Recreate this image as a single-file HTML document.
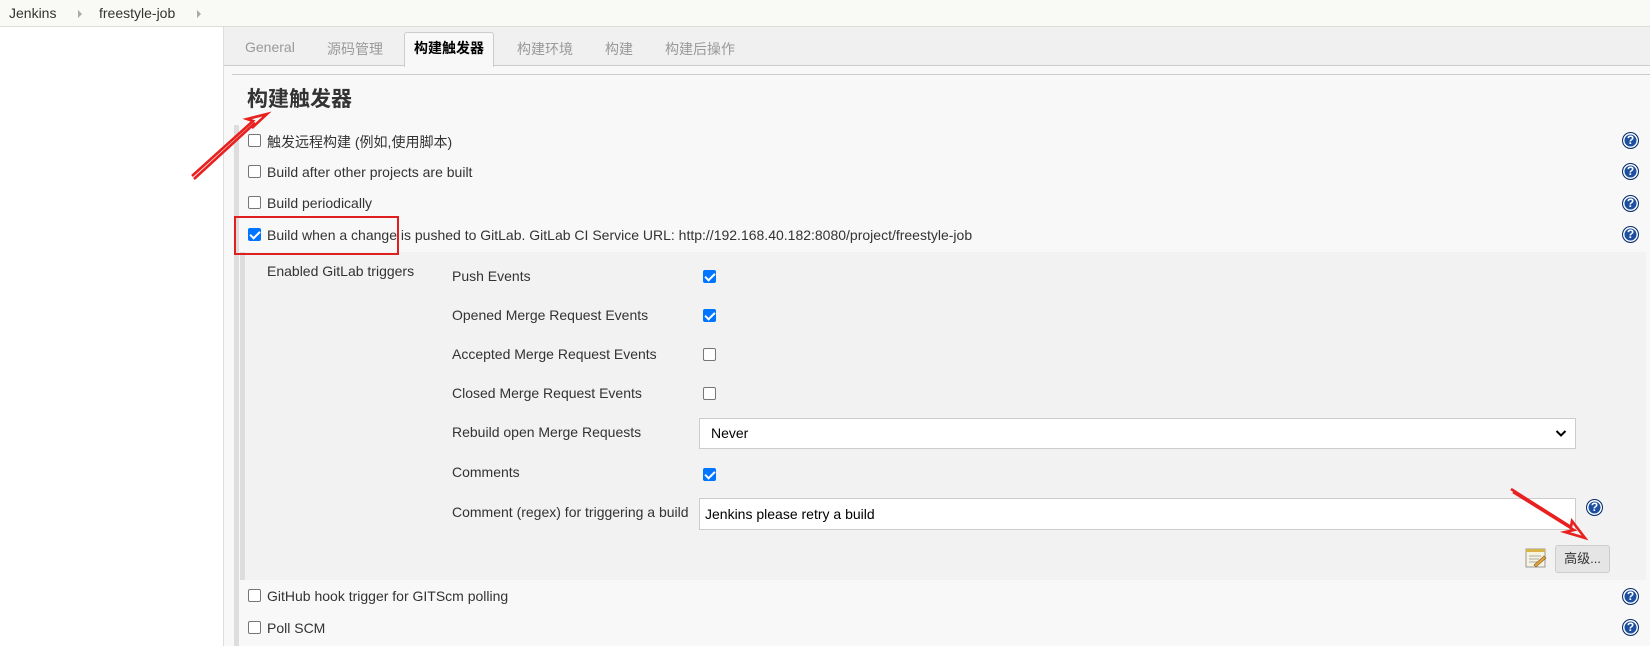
<!DOCTYPE html>
<html><head><meta charset="utf-8"><style>
*{box-sizing:border-box;margin:0;padding:0}
body{width:1650px;height:646px;overflow:hidden;background:#fff;font-family:"Liberation Sans","Noto Sans CJK SC",sans-serif;font-size:14px;color:#333;position:relative}
.abs{position:absolute}
.bc{left:0;top:0;width:1650px;height:27px;background:#f9faf6;border-bottom:1px solid #ddd}
.bc span{position:absolute;top:5px;color:#333;font-size:14px}
.tri{position:absolute;top:10px;width:0;height:0;border-left:4px solid #aaa;border-top:4px solid transparent;border-bottom:4px solid transparent}
.main{left:223px;top:27px;width:1427px;height:619px;background:#f8f8f8;border-left:1px solid #ddd}
.tabs{left:224px;top:27px;width:1426px;height:39px;background:#f0f0f0;border-bottom:1px solid #ccc}
.tab{position:absolute;top:12px;color:#999;font-size:14px}
.atab{left:404px;top:32px;width:90px;height:35px;background:#f8f8f8;border:1px solid #ccc;border-bottom:none;border-radius:3px 3px 0 0;font-weight:bold;color:#000;text-align:center;line-height:30px;font-size:14px}
.cb{position:absolute;width:13px;height:13px;border:1px solid #767676;border-radius:2px;background:#fff}
.cb.on{background:#0075ff;border-color:#0075ff}
.cb.on::after{content:"";position:absolute;left:3px;top:0px;width:4px;height:8px;border:solid #fff;border-width:0 2px 2px 0;transform:rotate(45deg)}
.t{position:absolute;white-space:nowrap}
.help{position:absolute;width:17px;height:17px;border-radius:50%;background:#1c4fa0;border:1px solid #0a2f6a;color:#fff;font-weight:bold;font-size:12px;text-align:center;line-height:15px;box-shadow:inset 0 0 0 1.5px #fff}
</style></head><body>
<div class="abs bc"><span style="left:9px">Jenkins</span><div class="tri" style="left:78px"></div><span style="left:99px">freestyle-job</span><div class="tri" style="left:197px"></div></div>
<div class="abs main"></div>
<div class="abs tabs"></div>
<div class="tab" style="left:245px;top:39px">General</div>
<div class="tab" style="left:327px;top:39px">源码管理</div>
<div class="abs atab">构建触发器</div>
<div class="tab" style="left:517px;top:39px">构建环境</div>
<div class="tab" style="left:605px;top:39px">构建</div>
<div class="tab" style="left:665px;top:39px">构建后操作</div>
<div class="abs" style="left:232px;top:74px;width:1418px;height:1px;background:#ccc"></div>
<div class="t" style="left:247px;top:83px;font-size:21px;font-weight:bold;color:#333">构建触发器</div>
<div class="abs" style="left:234px;top:125px;width:5px;height:521px;background:#ddd"></div>
<div class="abs" style="left:240px;top:252px;width:1406px;height:328px;background:#f2f2f2"></div>
<div class="abs" style="left:240px;top:252px;width:5px;height:328px;background:#ddd"></div>

<div class="cb" style="left:248px;top:134px"></div><div class="t" style="left:267px;top:132px">触发远程构建 (例如,使用脚本)</div>
<div class="cb" style="left:248px;top:165px"></div><div class="t" style="left:267px;top:164px">Build after other projects are built</div>
<div class="cb" style="left:248px;top:196px"></div><div class="t" style="left:267px;top:195px">Build periodically</div>
<div class="cb on" style="left:248px;top:228px"></div><div class="t" style="left:267px;top:227px">Build when a change is pushed to GitLab. GitLab CI Service URL: http://192.168.40.182:8080/project/freestyle-job</div>
<div class="help" style="left:1622px;top:132px">?</div>
<div class="help" style="left:1622px;top:163px">?</div>
<div class="help" style="left:1622px;top:195px">?</div>
<div class="help" style="left:1622px;top:226px">?</div>

<div class="t" style="left:267px;top:263px">Enabled GitLab triggers</div>
<div class="t" style="left:452px;top:268px">Push Events</div><div class="cb on" style="left:703px;top:270px"></div>
<div class="t" style="left:452px;top:307px">Opened Merge Request Events</div><div class="cb on" style="left:703px;top:309px"></div>
<div class="t" style="left:452px;top:346px">Accepted Merge Request Events</div><div class="cb" style="left:703px;top:348px"></div>
<div class="t" style="left:452px;top:385px">Closed Merge Request Events</div><div class="cb" style="left:703px;top:387px"></div>
<div class="t" style="left:452px;top:424px">Rebuild open Merge Requests</div>
<div class="abs" style="left:699px;top:418px;width:877px;height:31px;background:#fff;border:1px solid #ccc"><span class="t" style="left:11px;top:6px;color:#000">Never</span>
<svg class="abs" style="right:8px;top:10px" width="12" height="9" viewBox="0 0 12 9"><path d="M1.5 2 L6 6.5 L10.5 2" stroke="#000" stroke-width="2" fill="none"/></svg></div>
<div class="t" style="left:452px;top:464px">Comments</div><div class="cb on" style="left:703px;top:468px"></div>
<div class="t" style="left:452px;top:504px">Comment (regex) for triggering a build</div>
<div class="abs" style="left:699px;top:498px;width:877px;height:32px;background:#fff;border:1px solid #ccc"><span class="t" style="left:5px;top:7px;color:#000">Jenkins please retry a build</span></div>
<div class="help" style="left:1586px;top:499px">?</div>
<svg class="abs" style="left:1525px;top:547px" width="22" height="22" viewBox="0 0 22 22"><rect x="1" y="2" width="19" height="18" fill="#f6f3e0" stroke="#999"/><rect x="1" y="2" width="19" height="3" fill="#d9b44a"/><path d="M4 9h12M4 12h10M4 15h8" stroke="#aaa"/><path d="M9 18 L19 9 L21 11 L11 20 Z" fill="#e8a33a" stroke="#7a5a20" stroke-width=".6"/></svg>
<div class="abs" style="left:1555px;top:545px;width:55px;height:28px;background:#e5e5e5;border:1px solid #ccc;border-radius:3px;text-align:center;line-height:26px;font-size:13px">高级...</div>

<div class="cb" style="left:248px;top:589px"></div><div class="t" style="left:267px;top:588px">GitHub hook trigger for GITScm polling</div>
<div class="cb" style="left:248px;top:621px"></div><div class="t" style="left:267px;top:620px">Poll SCM</div>
<div class="help" style="left:1622px;top:588px">?</div>
<div class="help" style="left:1622px;top:619px">?</div>

<div class="abs" style="left:234px;top:216px;width:165px;height:39px;border:2px solid #e02020"></div>
<svg class="abs" style="left:0;top:0" width="1650" height="646">
<g fill="none" stroke="#e82020" stroke-width="2.6">
<path d="M194 179 L255 123 L252 128 L267 114 L247 119 L253 121 L192 176"/>
<path d="M1513 492 L1574 530 L1565 532 L1585 538 L1572 521 L1571 527 L1511 489"/>
</g></svg>
</body></html>
